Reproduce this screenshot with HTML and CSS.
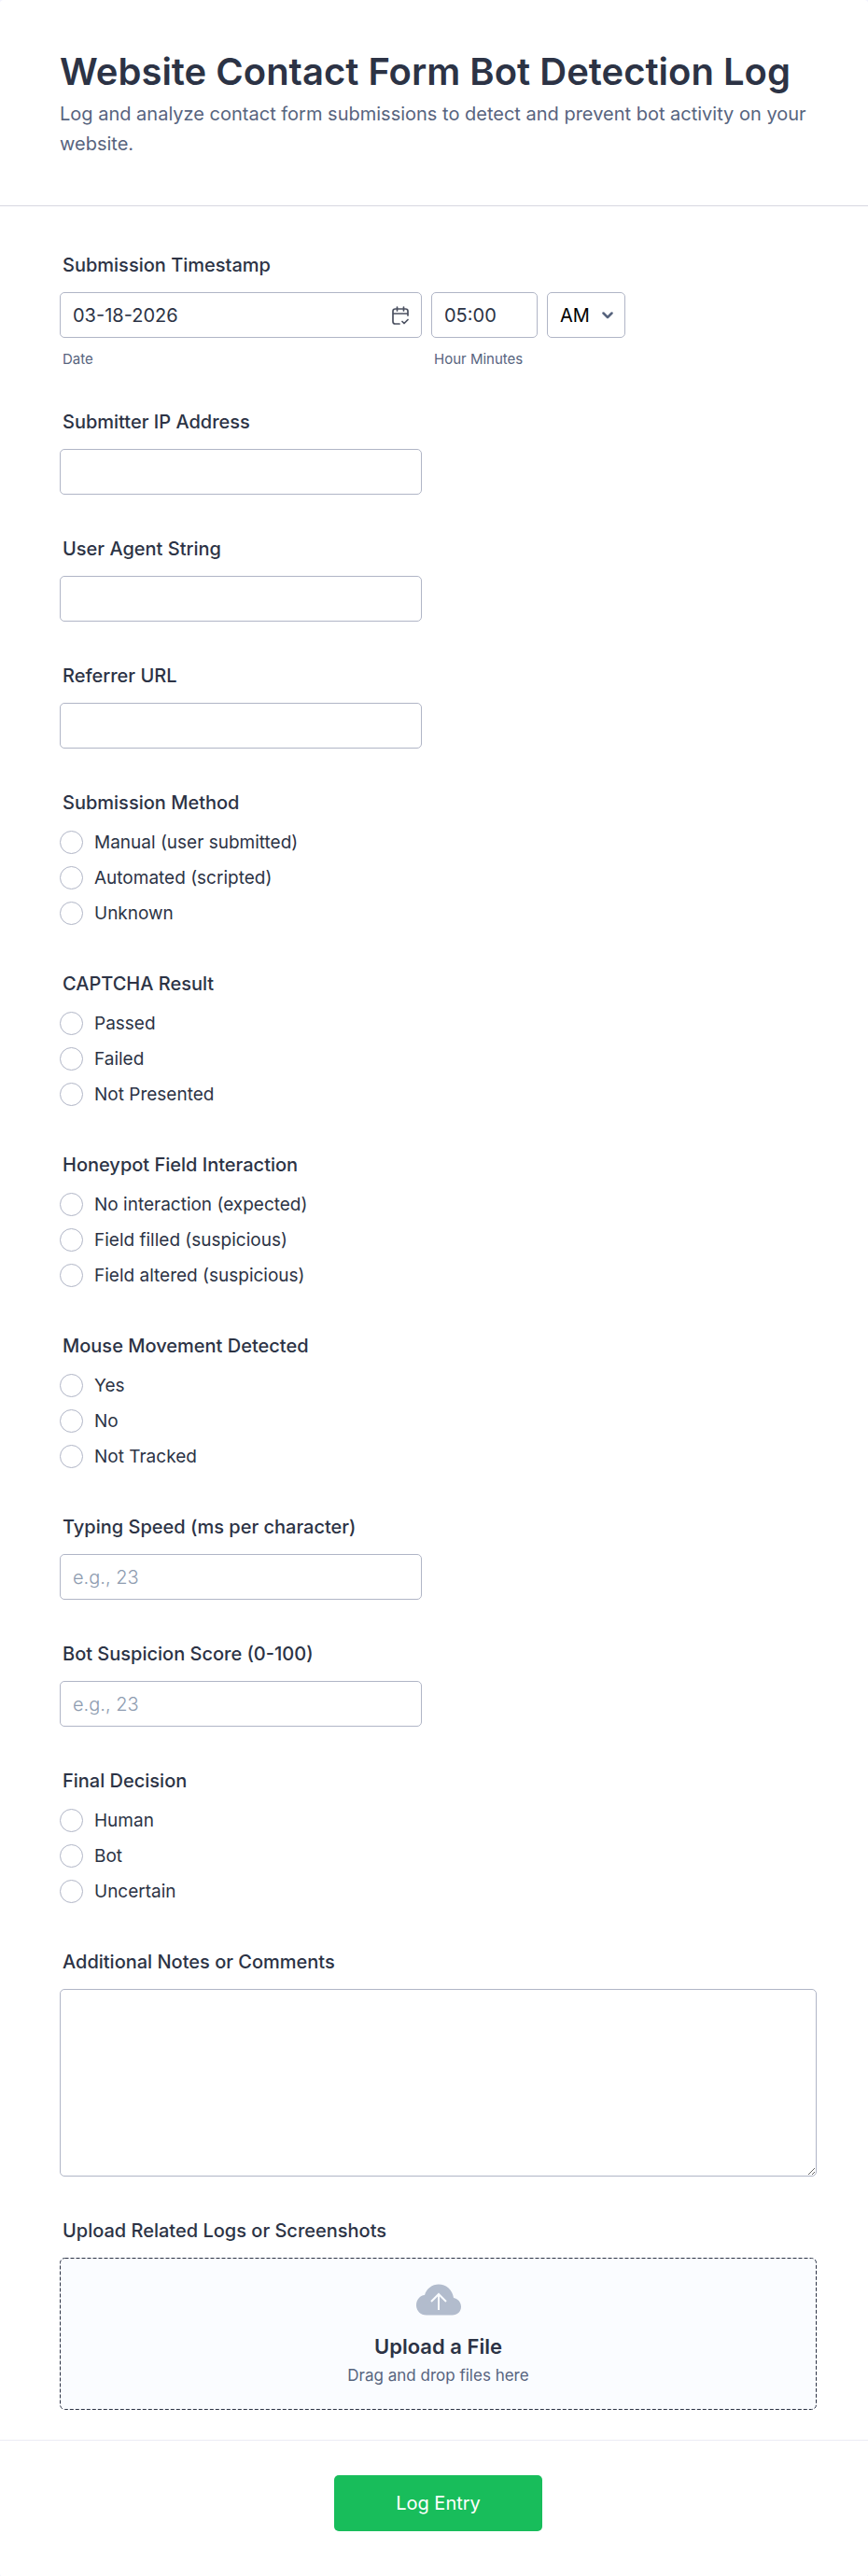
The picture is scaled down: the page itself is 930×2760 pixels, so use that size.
FILE: index.html
```html
<!DOCTYPE html>
<html lang="en">
<head>
<meta charset="utf-8">
<meta name="viewport" content="width=device-width, initial-scale=1">
<title>Website Contact Form Bot Detection Log</title>
<link rel="stylesheet" href="styles.css">
</head>
<body>
<form class="form">
  <header class="header">
    <h1 class="title">Website Contact Form Bot Detection Log</h1>
    <p class="subtitle">Log and analyze contact form submissions to detect and prevent bot activity on your website.</p>
  </header>

  <div class="fields">
    <fieldset class="field">
      <legend class="label">Submission Timestamp</legend>
      <div class="row">
        <div class="part part-date">
          <div class="date-box">
            <input class="input" id="date" type="text" value="03-18-2026">
            <svg class="calendar" viewBox="0 0 18 20" aria-hidden="true">
              <path d="M17 10V5.500Q17 3 14.500 3H3.500Q1 3 1 5.500V16.500Q1 19 3.500 19H8M1 8H17M5.500 1V5M12.500 1V5M11 16.500L13 18.500L17 14.500"/>
            </svg>
          </div>
          <label class="sublabel" for="date">Date</label>
        </div>
        <div class="part part-time">
          <input class="input" id="time" type="text" value="05:00">
          <label class="sublabel" for="time">Hour Minutes</label>
        </div>
        <div class="part part-period">
          <select class="input select" aria-label="AM or PM"><option>AM</option><option>PM</option></select>
          <svg class="chevron" viewBox="0 0 12 8" aria-hidden="true"><path d="M1.500 1.500L6 6L10.500 1.500"/></svg>
        </div>
      </div>
    </fieldset>

    <div class="field">
      <label class="label" for="ip">Submitter IP Address</label>
      <input class="input short" id="ip" type="text">
    </div>
    <div class="field">
      <label class="label" for="agent">User Agent String</label>
      <input class="input short" id="agent" type="text">
    </div>
    <div class="field">
      <label class="label" for="referrer">Referrer URL</label>
      <input class="input short" id="referrer" type="text">
    </div>

    <fieldset class="field">
      <legend class="label">Submission Method</legend>
      <div class="options">
        <label class="option"><input class="radio" type="radio" name="method">Manual (user submitted)</label>
        <label class="option"><input class="radio" type="radio" name="method">Automated (scripted)</label>
        <label class="option"><input class="radio" type="radio" name="method">Unknown</label>
      </div>
    </fieldset>
    <fieldset class="field">
      <legend class="label">CAPTCHA Result</legend>
      <div class="options">
        <label class="option"><input class="radio" type="radio" name="captcha">Passed</label>
        <label class="option"><input class="radio" type="radio" name="captcha">Failed</label>
        <label class="option"><input class="radio" type="radio" name="captcha">Not Presented</label>
      </div>
    </fieldset>
    <fieldset class="field">
      <legend class="label">Honeypot Field Interaction</legend>
      <div class="options">
        <label class="option"><input class="radio" type="radio" name="honeypot">No interaction (expected)</label>
        <label class="option"><input class="radio" type="radio" name="honeypot">Field filled (suspicious)</label>
        <label class="option"><input class="radio" type="radio" name="honeypot">Field altered (suspicious)</label>
      </div>
    </fieldset>
    <fieldset class="field">
      <legend class="label">Mouse Movement Detected</legend>
      <div class="options">
        <label class="option"><input class="radio" type="radio" name="mouse">Yes</label>
        <label class="option"><input class="radio" type="radio" name="mouse">No</label>
        <label class="option"><input class="radio" type="radio" name="mouse">Not Tracked</label>
      </div>
    </fieldset>

    <div class="field">
      <label class="label" for="speed">Typing Speed (ms per character)</label>
      <input class="input short" id="speed" type="text" inputmode="numeric" placeholder="e.g., 23">
    </div>
    <div class="field">
      <label class="label" for="score">Bot Suspicion Score (0-100)</label>
      <input class="input short" id="score" type="text" inputmode="numeric" placeholder="e.g., 23">
    </div>

    <fieldset class="field">
      <legend class="label">Final Decision</legend>
      <div class="options">
        <label class="option"><input class="radio" type="radio" name="decision">Human</label>
        <label class="option"><input class="radio" type="radio" name="decision">Bot</label>
        <label class="option"><input class="radio" type="radio" name="decision">Uncertain</label>
      </div>
    </fieldset>

    <div class="field">
      <label class="label" for="notes">Additional Notes or Comments</label>
      <textarea class="input notes" id="notes"></textarea>
    </div>

    <div class="field">
      <span class="label" id="upload-label">Upload Related Logs or Screenshots</span>
      <button class="drop" type="button" aria-describedby="upload-label">
        <svg class="outline" aria-hidden="true"><rect class="outline-rect" x="0.500" y="0.500" rx="5"/></svg>
        <svg class="cloud" viewBox="0 0 48 34" aria-hidden="true">
          <path class="cloud-shape" d="M11 33.500C4.500 33.500 0 28.800 0 23C0 17 4 12.500 9 12C11 5 17 0.500 24 0.500C32 0.500 39 6.500 40 15C44.800 16 48 19.800 48 24.500C48 29.700 44 33.500 38.500 33.500Z"/>
          <path class="cloud-arrow" d="M24 28V11.500M16 19L24 11L32 19"/>
        </svg>
        <span class="drop-title">Upload a File</span>
        <span class="drop-hint">Drag and drop files here</span>
      </button>
    </div>
  </div>

  <footer class="footer">
    <button class="submit" type="submit">Log Entry</button>
  </footer>
</form>
</body>
</html>
```
FILE: styles.css
```css
* { box-sizing: border-box; }

body {
  margin: 0;
  background: #f3f3fe;
  color: #2c3345;
  font-family: Inter, "Liberation Sans", sans-serif;
  font-size: 20px;
}

.form {
  background: #fff;
  border-radius: 4px;
}

.header {
  padding: 48px 55px 50px 64px;
  border-bottom: 1px solid #d7d8e1;
}

.title {
  margin: 0;
  font-size: 40px;
  font-weight: 600;
  line-height: 58px;
}

.subtitle {
  margin: 0;
  color: #57647e;
  font-weight: 400;
  line-height: 32px;
}

.fields {
  display: flex;
  flex-direction: column;
  gap: 46px;
  padding: 51px 55px 32px 64px;
}

.field {
  display: block;
  min-width: 0;
  margin: 0;
  padding: 0;
  border: 0;
}

.label {
  display: block;
  margin-bottom: 17px;
  padding: 0 3px;
  font-weight: 500;
  line-height: 24px;
}

.input {
  display: block;
  width: 100%;
  height: 49px;
  margin: 0;
  padding: 0 13px;
  border: 1px solid #b0b5c6;
  border-radius: 5px;
  background: #fff;
  color: #2c3345;
  font: inherit;
}

.input::placeholder {
  color: #8e9cb0;
  font-weight: 300;
  opacity: 1;
}

.short {
  max-width: 388px;
}

.row {
  display: flex;
  align-items: flex-start;
  gap: 10px;
}

.part-date { width: 388px; }
.part-time { width: 114px; }

.part-period {
  position: relative;
  width: 84px;
}

.date-box { position: relative; }

.calendar {
  position: absolute;
  top: 15px;
  right: 14px;
  width: 18px;
  height: 20px;
  fill: none;
  stroke: #4b5060;
  stroke-width: 1.7;
  stroke-linecap: round;
  stroke-linejoin: round;
}

.select {
  appearance: none;
  color: #000;
}

.chevron {
  position: absolute;
  top: 21px;
  right: 13px;
  width: 12px;
  height: 8px;
  fill: none;
  stroke: #57647e;
  stroke-width: 2.5;
  stroke-linecap: round;
  stroke-linejoin: round;
  pointer-events: none;
}

.sublabel {
  display: block;
  margin-top: 14px;
  padding-left: 3px;
  color: #57647e;
  font-size: 15px;
  line-height: 18px;
}

.options {
  display: flex;
  flex-direction: column;
  align-items: flex-start;
  gap: 13px;
  padding: 1px 0 5px;
}

.option {
  display: flex;
  align-items: center;
  gap: 12px;
  font-size: 19px;
  line-height: 25px;
}

.radio {
  appearance: none;
  width: 25px;
  height: 25px;
  margin: 0;
  border: 1px solid #b0b5c6;
  border-radius: 50%;
  background: #fff;
}

.radio:checked {
  border: 7px solid #18bd5b;
}

.notes {
  height: 201px;
  padding: 12px 13px;
  resize: vertical;
}

.drop {
  position: relative;
  display: flex;
  flex-direction: column;
  align-items: center;
  width: 100%;
  padding: 28px 16px 23px;
  border: 0;
  border-radius: 5px;
  background: #fafcff;
  color: inherit;
  font: inherit;
}

.outline {
  position: absolute;
  inset: 0;
  width: 100%;
  height: 100%;
}

.outline-rect {
  width: calc(100% - 1px);
  height: calc(100% - 1px);
  fill: none;
  stroke: #2c3345;
  stroke-dasharray: 4 2;
}

.cloud {
  width: 48px;
  height: 34px;
  margin-bottom: 16px;
}

.cloud-shape { fill: #b2bccd; }

.cloud-arrow {
  fill: none;
  stroke: #fafcff;
  stroke-width: 2;
}

.drop-title {
  font-size: 22px;
  font-weight: 600;
  line-height: 34px;
}

.drop-hint {
  color: #57647e;
  font-size: 17px;
  line-height: 28px;
}

.footer {
  display: flex;
  justify-content: center;
  padding: 37px 55px 49px 64px;
  border-top: 1px solid #ebebf4;
}

.submit {
  min-width: 223px;
  height: 60px;
  padding: 0 32px;
  border: 0;
  border-radius: 5px;
  background: #18bd5b;
  color: #fff;
  font: inherit;
}
```
